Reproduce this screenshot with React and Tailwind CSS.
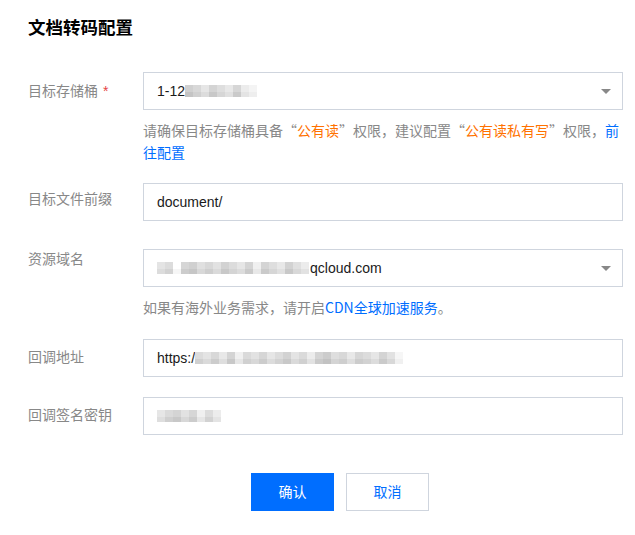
import React from "react";

const font = { fontFamily: '"Liberation Sans", "Noto Sans CJK SC", sans-serif' };
const cjk = { fontFamily: '"Noto Sans CJK SC", "Liberation Sans", sans-serif' };

function Mosaic({ cells }) {
  return (
    <span className="inline-flex flex-col align-middle">
      <span className="flex">
        {cells.map((c, i) => (
          <span key={i} className="block w-[8px] h-[7px]" style={{ background: c[0] }} />
        ))}
      </span>
      <span className="flex">
        {cells.map((c, i) => (
          <span key={i} className="block w-[8px] h-[5px]" style={{ background: c[1] }} />
        ))}
      </span>
    </span>
  );
}

const g1 = [
  ["#d0d0d0", "#c4c4c4"], ["#d8d8d8", "#d0d0d0"], ["#e6e6e6", "#dcdcdc"], ["#d4d4d4", "#c8c8c8"],
  ["#dedede", "#d6d6d6"], ["#e8e8e8", "#e0e0e0"], ["#d6d6d6", "#cacaca"], ["#ececec", "#e4e4e4"],
  ["#f4f4f4", "#eeeeee"],
];
const g3 = [
  ["#e4e4e4", "#dcdcdc"], ["#dcdcdc", "#d2d2d2"], ["#ffffff", "#f6f6f6"], ["#d6d6d6", "#cccccc"],
  ["#d0d0d0", "#c6c6c6"], ["#e0e0e0", "#d8d8d8"], ["#d8d8d8", "#cecece"], ["#e2e2e2", "#dadada"],
  ["#d2d2d2", "#c8c8c8"], ["#dcdcdc", "#d4d4d4"], ["#e6e6e6", "#dcdcdc"], ["#d4d4d4", "#cacaca"],
  ["#f0f0f0", "#e8e8e8"], ["#d4d4d4", "#cacaca"], ["#dedede", "#d6d6d6"], ["#e8e8e8", "#e0e0e0"],
  ["#d2d2d2", "#c8c8c8"], ["#e0e0e0", "#d8d8d8"], ["#ececec", "#e2e2e2"],
];
const g4 = [
  ["#dcdcdc", "#d0d0d0"], ["#e4e4e4", "#dadada"], ["#d8d8d8", "#cccccc"], ["#e8e8e8", "#dedede"],
  ["#d4d4d4", "#c8c8c8"], ["#f0f0f0", "#e6e6e6"], ["#dadada", "#d0d0d0"], ["#e2e2e2", "#d8d8d8"],
  ["#d6d6d6", "#cccccc"], ["#e6e6e6", "#dcdcdc"], ["#dcdcdc", "#d2d2d2"], ["#d2d2d2", "#c8c8c8"],
  ["#e4e4e4", "#dadada"], ["#dadada", "#d0d0d0"], ["#ececec", "#e2e2e2"], ["#d4d4d4", "#cacaca"],
  ["#cccccc", "#c2c2c2"], ["#dedede", "#d4d4d4"], ["#d8d8d8", "#cecece"], ["#e8e8e8", "#dedede"],
  ["#d6d6d6", "#cccccc"], ["#dcdcdc", "#d2d2d2"], ["#e6e6e6", "#dcdcdc"], ["#d4d4d4", "#cacaca"],
  ["#e2e2e2", "#d8d8d8"], ["#f6f6f6", "#f0f0f0"],
];
const g5 = [
  ["#e6e6e6", "#dedede"], ["#dadada", "#cfcfcf"], ["#d4d4d4", "#c8c8c8"], ["#e2e2e2", "#d8d8d8"],
  ["#d6d6d6", "#cccccc"], ["#f0f0f0", "#e6e6e6"], ["#dcdcdc", "#d2d2d2"], ["#ececec", "#e4e4e4"],
];

function Arrow() {
  return (
    <svg width="10" height="5" viewBox="0 0 10 5" className="shrink-0">
      <path d="M0 0 L10 0 L5 5 Z" fill="#888888" />
    </svg>
  );
}

function Box({ children, arrow }) {
  return (
    <div className="w-[480px] h-[38px] border border-[#cfd5de] flex items-center pl-[13px] pr-[11px] text-[14px] text-[#1a1a1a] bg-white">
      <div className="flex-1 flex items-center whitespace-nowrap overflow-hidden">{children}</div>
      {arrow && <Arrow />}
    </div>
  );
}

function Label({ children, className = "" }) {
  return (
    <div className={"w-[115px] shrink-0 text-[14px] text-[#888888] " + className}>{children}</div>
  );
}

export default function App() {
  return (
    <div className="w-[635px] h-[535px] bg-white relative overflow-hidden" style={font}>
      <div className="pl-[28px] pt-[17px]">
        <h1 className="text-[17.5px] font-bold text-black leading-[22px]">文档转码配置</h1>

        <div className="mt-[33px] flex">
          <Label className="h-[38px] flex items-center">
            目标存储桶<span className="text-[#e54545] ml-[5px]">*</span>
          </Label>
          <div>
            <Box arrow>
              <span>1-12</span>
              <Mosaic cells={g1} />
            </Box>
            <p className="mt-[9px] text-[14px] leading-[22px] text-[#888888] w-[480px]" style={cjk}>
              请确保目标存储桶具备“<span className="text-[#ff7200]">公有读</span>”权限，建议配置“<span className="text-[#ff7200]">公有读私有写</span>”权限，<span className="text-[#006eff]">前往配置</span>
            </p>
          </div>
        </div>

        <div className="mt-[20px] flex">
          <Label className="h-[38px] flex items-center pb-[6px]">目标文件前缀</Label>
          <Box>document/</Box>
        </div>

        <div className="mt-[28px] flex">
          <Label className="h-[22px] leading-[22px] mt-[-1px]">资源域名</Label>
          <div>
            <Box arrow>
              <Mosaic cells={g3} />
              <span className="ml-[1px]">qcloud.com</span>
            </Box>
            <p className="mt-[9px] text-[14px] leading-[22px] text-[#888888]" style={cjk}>
              如果有海外业务需求，请开启<span className="text-[#006eff]">CDN全球加速服务</span>。
            </p>
          </div>
        </div>

        <div className="mt-[21px] flex">
          <Label className="h-[37px] flex items-center">回调地址</Label>
          <Box>
            <span>https:/</span>
            <Mosaic cells={g4} />
          </Box>
        </div>

        <div className="mt-[20px] flex">
          <Label className="h-[37px] flex items-center">回调签名密钥</Label>
          <Box>
            <Mosaic cells={g5} />
          </Box>
        </div>

        <div className="mt-[38px] flex gap-[12px] pl-[223px]">
          <button className="w-[83px] h-[38px] bg-[#006eff] text-white text-[14px]">确认</button>
          <button className="w-[83px] h-[38px] border border-[#cfd5de] text-[#006eff] text-[14px] bg-white">取消</button>
        </div>
      </div>
    </div>
  );
}
